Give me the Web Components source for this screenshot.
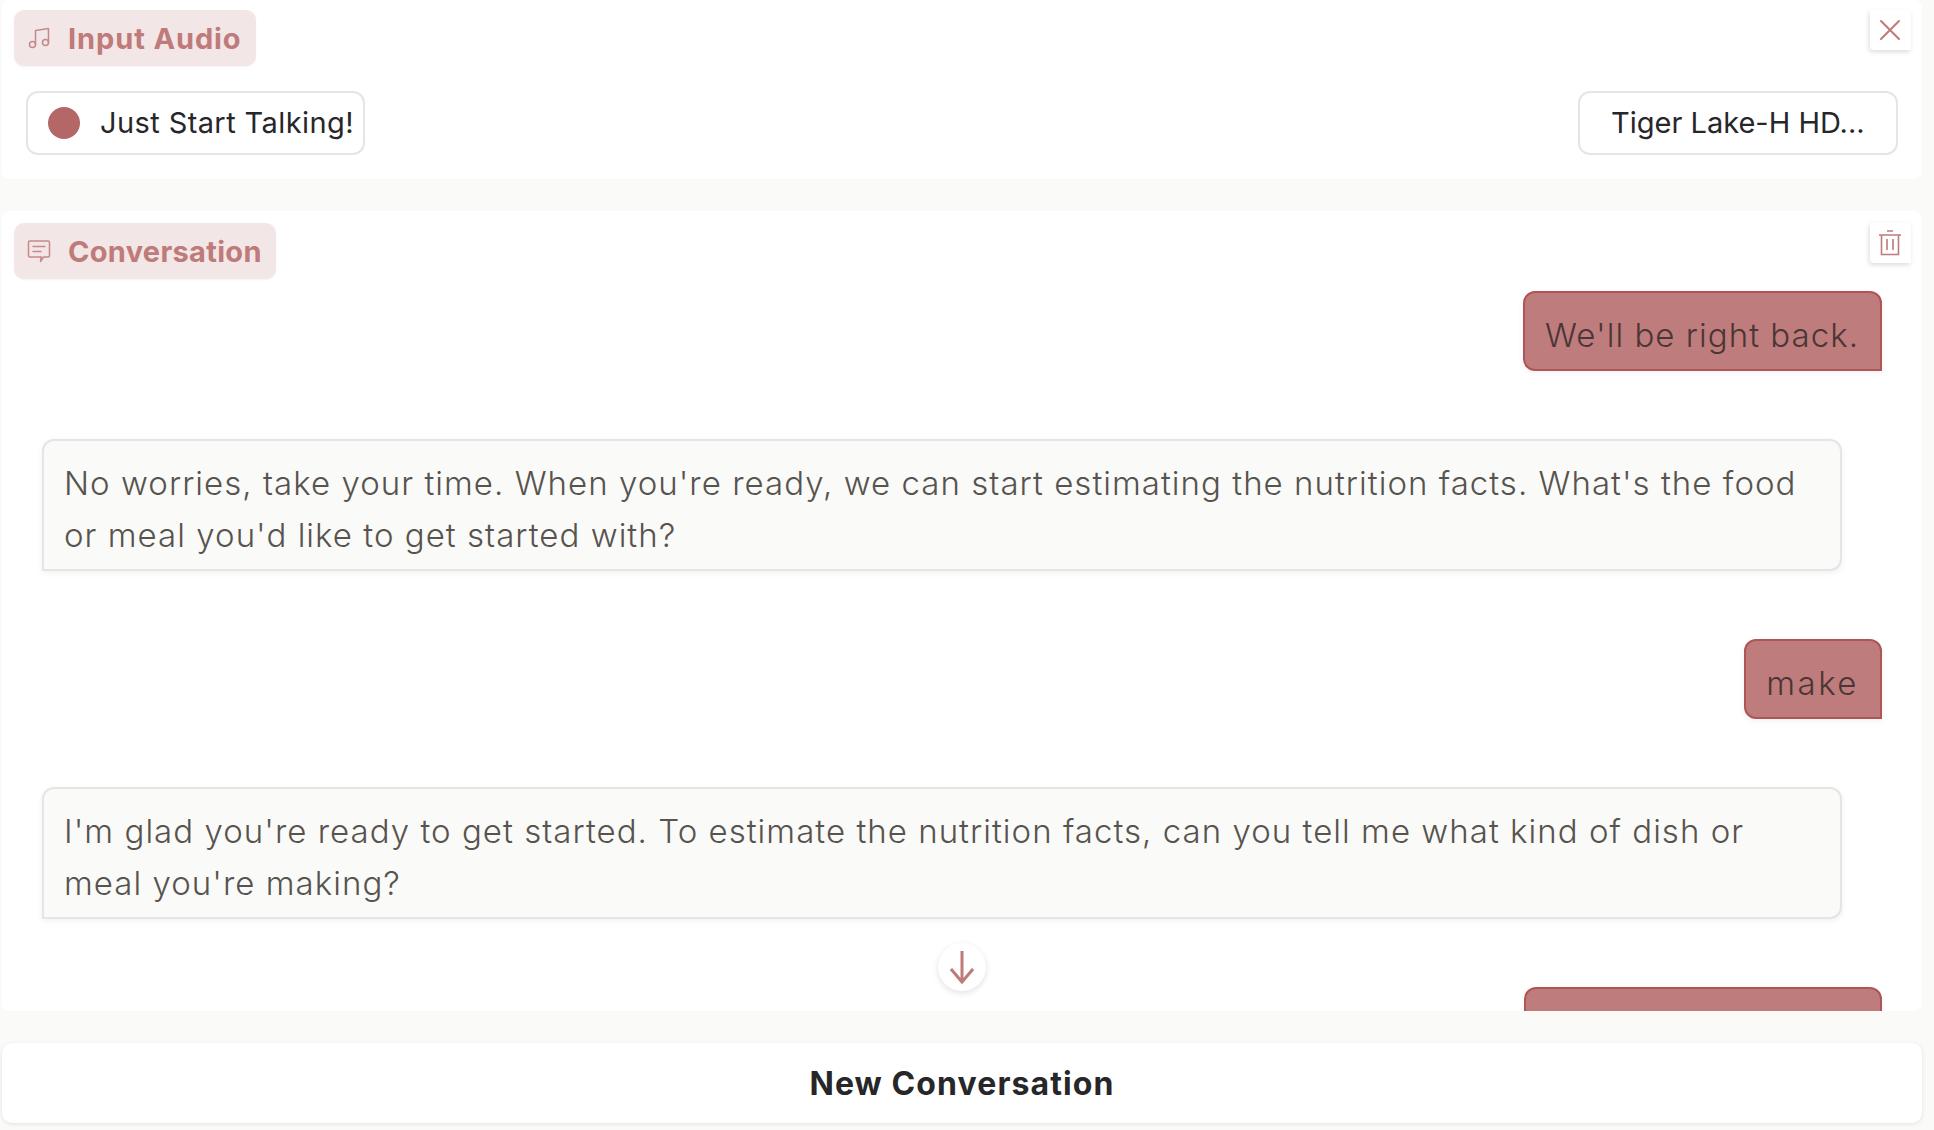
<!DOCTYPE html>
<html>
<head>
<meta charset="utf-8">
<title>Input Audio</title>
<style>
    html, body { margin: 0; height: 100%; }
    body {
        background: #FAFAF8;
        font-family: "Inter", "Liberation Sans", sans-serif;
        color: #27272A;
        overflow: hidden;
    }
    main {
        display: flex;
        flex-direction: column;
        gap: 32px;
        padding: 0 12px 0 2px;
    }
</style>
</head>
<body>
<main>
    <app-panel label-top="10">
        <block-label slot="label" text="Input Audio" icon="music" style="--track:0.9px"></block-label>
        <icon-button slot="action" icon="close" top="10"></icon-button>
        <div style="display:flex;justify-content:space-between;padding:91px 24px 24px 24px">
            <record-button text="Just Start Talking!"></record-button>
            <device-select text="Tiger Lake-H HD..."></device-select>
        </div>
    </app-panel>
    <app-panel label-top="12" style="height:800px">
        <block-label slot="label" text="Conversation" icon="chat" style="--track:0.3px"></block-label>
        <icon-button slot="action" icon="trash" top="12"></icon-button>
        <chat-log>
            <chat-bubble from="user">We'll be right back.</chat-bubble>
            <chat-bubble from="bot">No worries, take your time. When you're ready, we can start estimating the nutrition facts. What's the food or meal you'd like to get started with?</chat-bubble>
            <chat-bubble from="user" style="--track:2.5px">make</chat-bubble>
            <chat-bubble from="bot">I'm glad you're ready to get started. To estimate the nutrition facts, can you tell me what kind of dish or meal you're making?</chat-bubble>
            <chat-bubble from="user" style="width:358px;height:80px"></chat-bubble>
        </chat-log>
        <scroll-arrow slot="action"></scroll-arrow>
    </app-panel>
    <big-button>New Conversation</big-button>
</main>

<script>
const ICONS = {
    music: `<svg width="24" height="24" viewBox="0 0 24 24" fill="none" stroke="currentColor" stroke-width="1.5" stroke-linecap="round" stroke-linejoin="round"><path d="M8.5 18.5V4.5l13-2v14"/><circle cx="5.5" cy="18.5" r="3"/><circle cx="18.5" cy="16.5" r="3"/></svg>`,
    chat: `<svg width="24" height="24" viewBox="0 0 24 24" fill="none" stroke="currentColor" stroke-width="1.5" stroke-linecap="round" stroke-linejoin="round"><path d="M3 2h18a1.5 1.5 0 0 1 1.5 1.5v13A1.5 1.5 0 0 1 21 18h-4.5l-3 4.5.8-4.5H3a1.5 1.5 0 0 1-1.5-1.5v-13A1.5 1.5 0 0 1 3 2z"/><path d="M6 7.5h12M6 12.5h8"/></svg>`,
    close: `<svg width="22" height="22" viewBox="0 0 22 22" fill="none" stroke="currentColor" stroke-width="2" stroke-linecap="round"><path d="M2 2l18 18M20 2L2 20"/></svg>`,
    trash: `<svg width="22" height="26" viewBox="0 0 22 26" fill="none" stroke="currentColor" stroke-width="1.6"><path d="M8 1h6M0 5h22M2.5 5v19.5h17V5M8 9v11M14 9v11"/></svg>`
};

class AppPanel extends HTMLElement {
    constructor() {
        super();
        this.attachShadow({ mode: 'open' });
        this.shadowRoot.innerHTML = `
            <style>
                :host {
                    display: block;
                    position: relative;
                    background: #fff;
                    border-radius: 8px;
                    overflow: hidden;
                }
                .label {
                    position: absolute;
                    left: 12px;
                    top: ${this.getAttribute('label-top') || 10}px;
                    z-index: 1;
                }
            </style>
            <div class="label"><slot name="label"></slot></div>
            <slot name="action"></slot>
            <slot></slot>
        `;
    }
}

class BlockLabel extends HTMLElement {
    constructor() {
        super();
        this.attachShadow({ mode: 'open' });
        this.shadowRoot.innerHTML = `
            <style>
                :host {
                    display: inline-flex;
                    align-items: center;
                    gap: 17px;
                    height: 56px;
                    box-sizing: border-box;
                    padding: 0 14px 0 13px;
                    background: #F2E6E6;
                    border-radius: 10px;
                    box-shadow: 0 1px 2px rgba(0, 0, 0, 0.05);
                    color: #BF7A7A;
                    font-size: 29px;
                    font-weight: 700;
                    letter-spacing: var(--track, 0);
                }
                svg { opacity: 0.85; flex: none; }
            </style>
            ${ICONS[this.getAttribute('icon')]}
            <span>${this.getAttribute('text')}</span>
        `;
    }
}

class IconButton extends HTMLElement {
    constructor() {
        super();
        this.attachShadow({ mode: 'open' });
        this.shadowRoot.innerHTML = `
            <style>
                :host {
                    display: flex;
                    align-items: center;
                    justify-content: center;
                    position: absolute;
                    right: 11px;
                    top: ${this.getAttribute('top') || 10}px;
                    width: 41px;
                    height: 40px;
                    box-sizing: border-box;
                    padding-right: 2px;
                    background: #fff;
                    border-radius: 0 4px 0 4px;
                    box-shadow: -1px 2px 5px rgba(0, 0, 0, 0.14);
                    color: #BF7A7A;
                }
            </style>
            ${ICONS[this.getAttribute('icon')]}
        `;
    }
}

class RecordButton extends HTMLElement {
    constructor() {
        super();
        this.attachShadow({ mode: 'open' });
        this.shadowRoot.innerHTML = `
            <style>
                :host {
                    display: flex;
                    align-items: center;
                    gap: 20px;
                    height: 64px;
                    box-sizing: border-box;
                    padding: 0 9px 0 20px;
                    background: #fff;
                    border: 2px solid #E5E5E5;
                    border-radius: 12px;
                    font-size: 29px;
                    font-weight: 400;
                    letter-spacing: 0.4px;
                    color: #27272A;
                }
                i {
                    width: 32px;
                    height: 32px;
                    border-radius: 50%;
                    background: #B56767;
                }
                span { position: relative; top: -1px; }
            </style>
            <i></i>
            <span>${this.getAttribute('text')}</span>
        `;
    }
}

class DeviceSelect extends HTMLElement {
    constructor() {
        super();
        this.attachShadow({ mode: 'open' });
        this.shadowRoot.innerHTML = `
            <style>
                :host {
                    display: flex;
                    align-items: center;
                    width: 320px;
                    height: 64px;
                    box-sizing: border-box;
                    padding: 0 31px 2px;
                    background: #fff;
                    border: 2px solid #E5E5E5;
                    border-radius: 12px;
                    font-size: 29px;
                    color: #27272A;
                    white-space: nowrap;
                }
            </style>
            <span>${this.getAttribute('text')}</span>
        `;
    }
}

class ChatLog extends HTMLElement {
    constructor() {
        super();
        this.attachShadow({ mode: 'open' });
        this.shadowRoot.innerHTML = `
            <style>
                :host {
                    display: flex;
                    flex-direction: column;
                    gap: 68px;
                    padding: 80px 40px 0 40px;
                }
            </style>
            <slot></slot>
        `;
    }
}

class ChatBubble extends HTMLElement {
    constructor() {
        super();
        this.attachShadow({ mode: 'open' });
        this.shadowRoot.innerHTML = `
            <style>
                :host {
                    display: block;
                    box-sizing: border-box;
                    padding: 16px 21px 8px 20px;
                    border-radius: 12px;
                    border: 2px solid #E5E5E5;
                    font-size: 33px;
                    font-weight: 300;
                    letter-spacing: var(--track, 1.03px);
                    line-height: 52px;
                    box-shadow: 0 2px 6px rgba(0, 0, 0, 0.06);
                }
                :host([from="user"]) {
                    align-self: flex-end;
                    background: #BF7C7C;
                    border-color: #AE5555;
                    border-bottom-right-radius: 0;
                    color: #4A3636;
                }
                :host([from="bot"]) {
                    align-self: stretch;
                    margin-right: 40px;
                    background: #FAFAF8;
                    border-bottom-left-radius: 0;
                    color: #57534E;
                }
            </style>
            <slot></slot>
        `;
    }
}

class ScrollArrow extends HTMLElement {
    constructor() {
        super();
        this.attachShadow({ mode: 'open' });
        this.shadowRoot.innerHTML = `
            <style>
                :host {
                    display: flex;
                    align-items: center;
                    justify-content: center;
                    position: absolute;
                    left: 936px;
                    bottom: 20px;
                    width: 48px;
                    height: 48px;
                    border-radius: 50%;
                    background: #fff;
                    box-shadow: 0 2px 6px rgba(0, 0, 0, 0.12);
                    color: #BF7A7A;
                    z-index: 1;
                }
            </style>
            <svg width="24" height="34" viewBox="0 0 24 34" fill="none" stroke="currentColor" stroke-width="3"><path d="M12 1v31M1 19l11 13 11-13"/></svg>
        `;
    }
}

class BigButton extends HTMLElement {
    constructor() {
        super();
        this.attachShadow({ mode: 'open' });
        this.shadowRoot.innerHTML = `
            <style>
                :host {
                    display: flex;
                    align-items: center;
                    justify-content: center;
                    height: 80px;
                    background: #fff;
                    border-radius: 10px;
                    box-shadow: 0 1px 4px rgba(0, 0, 0, 0.1);
                    font-size: 32px;
                    font-weight: 700;
                    letter-spacing: 1.1px;
                    color: #27272A;
                }
            </style>
            <slot></slot>
        `;
    }
}

customElements.define('app-panel', AppPanel);
customElements.define('block-label', BlockLabel);
customElements.define('icon-button', IconButton);
customElements.define('record-button', RecordButton);
customElements.define('device-select', DeviceSelect);
customElements.define('chat-log', ChatLog);
customElements.define('chat-bubble', ChatBubble);
customElements.define('scroll-arrow', ScrollArrow);
customElements.define('big-button', BigButton);
</script>
</body>
</html>
